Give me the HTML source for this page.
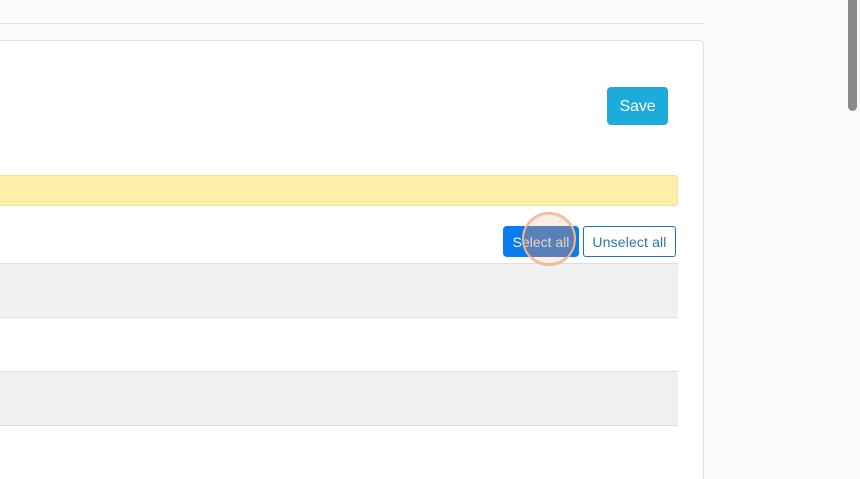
<!DOCTYPE html>
<html>
<head>
<meta charset="utf-8">
<style>
html,body{margin:0;padding:0;width:860px;height:479px;overflow:hidden;background:#f9fbfa;font-family:"Liberation Sans",sans-serif;}
#w{position:relative;width:860px;height:479px;overflow:hidden;}
.a{position:absolute;box-sizing:border-box;}
.btn{display:flex;align-items:center;justify-content:center;white-space:nowrap;}
</style>
</head>
<body>
<div id="w">
<div class="a" style="left:0;top:23px;width:704px;height:1px;background:#dfe3e3;"></div>
<div class="a" style="left:-10px;top:40px;width:714px;height:439px;background:#fff;border:1px solid #e0e3e4;border-bottom:0;border-radius:4px 4px 0 0;"></div>

<div class="a btn" style="left:607px;top:87px;width:61px;height:38px;padding-top:1px;background:#1cabdb;border-radius:4px;color:#fff;font-size:16px;letter-spacing:-.1px;">Save</div>

<div class="a" style="left:-10px;top:175px;width:688px;height:31px;background:#feefa8;border:1px solid #e8dfa8;border-radius:3px;"></div>

<div class="a btn" style="left:503px;top:226px;width:76px;height:31px;background:#0a7cf0;border-radius:4px;color:#fff;font-size:14px;">Select all</div>
<div class="a btn" style="left:583px;top:226px;width:93px;height:31px;background:#fff;border:1px solid #1f74a8;border-radius:3px;color:#2a76ae;font-size:14px;letter-spacing:.15px;">Unselect all</div>

<div class="a" style="left:0;top:263px;width:678px;height:55px;background:#f1f1f1;border-top:1px solid #dedede;border-bottom:1px solid #dedede;"></div>
<div class="a" style="left:0;top:371px;width:678px;height:55px;background:#f1f1f1;border-top:1px solid #dedede;border-bottom:1px solid #dedede;"></div>

<div class="a" style="left:522px;top:212px;width:54px;height:54px;border-radius:50%;background:linear-gradient(to bottom,rgba(245,190,150,.28) 12px,rgba(215,135,95,.38) 12px,rgba(215,135,95,.38) 43px,rgba(245,190,150,.28) 43px);background-clip:padding-box;background-origin:padding-box;border:2px solid #f4b98e;box-shadow:inset 0 0 0 1px rgba(170,130,105,.3);"></div>

<div class="a" style="left:848px;top:0;width:9px;height:111px;background:#8a8a8a;border-radius:0 0 5px 5px;"></div>
</div>
</body>
</html>
